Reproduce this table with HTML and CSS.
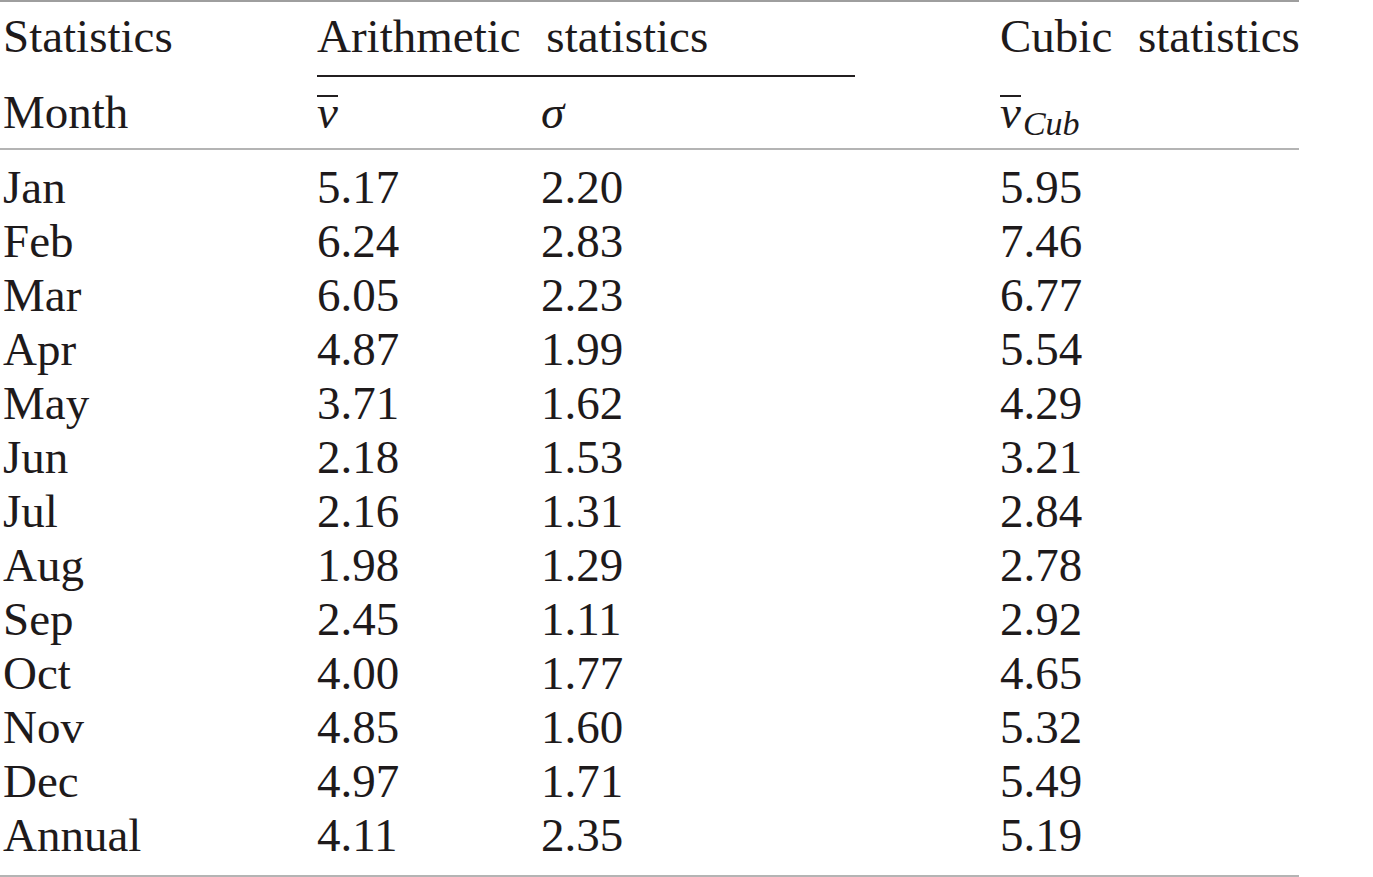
FILE: index.html
```html
<!DOCTYPE html>
<html>
<head>
<meta charset="utf-8">
<link rel="stylesheet" href="styles.css">
</head>
<body>
<table class="stats">
  <colgroup>
    <col class="c-month">
    <col class="c-mean">
    <col class="c-sigma">
    <col class="c-gap">
    <col class="c-cub">
  </colgroup>
  <thead>
    <tr class="h1">
      <th>Statistics</th>
      <th colspan="2" class="group"><span class="group-label">Arithmetic statistics</span></th>
      <th></th>
      <th class="wide">Cubic statistics</th>
    </tr>
    <tr class="h2">
      <th>Month</th>
      <th><span class="bar"><i>v</i></span></th>
      <th><i>σ</i></th>
      <th></th>
      <th><span class="bar"><i>v</i></span><sub><i>Cub</i></sub></th>
    </tr>
  </thead>
  <tbody>
    <tr class="first"><td>Jan</td><td>5.17</td><td>2.20</td><td></td><td>5.95</td></tr>
    <tr><td>Feb</td><td>6.24</td><td>2.83</td><td></td><td>7.46</td></tr>
    <tr><td>Mar</td><td>6.05</td><td>2.23</td><td></td><td>6.77</td></tr>
    <tr><td>Apr</td><td>4.87</td><td>1.99</td><td></td><td>5.54</td></tr>
    <tr><td>May</td><td>3.71</td><td>1.62</td><td></td><td>4.29</td></tr>
    <tr><td>Jun</td><td>2.18</td><td>1.53</td><td></td><td>3.21</td></tr>
    <tr><td>Jul</td><td>2.16</td><td>1.31</td><td></td><td>2.84</td></tr>
    <tr><td>Aug</td><td>1.98</td><td>1.29</td><td></td><td>2.78</td></tr>
    <tr><td>Sep</td><td>2.45</td><td>1.11</td><td></td><td>2.92</td></tr>
    <tr><td>Oct</td><td>4.00</td><td>1.77</td><td></td><td>4.65</td></tr>
    <tr><td>Nov</td><td>4.85</td><td>1.60</td><td></td><td>5.32</td></tr>
    <tr><td>Dec</td><td>4.97</td><td>1.71</td><td></td><td>5.49</td></tr>
    <tr class="last"><td>Annual</td><td>4.11</td><td>2.35</td><td></td><td>5.19</td></tr>
  </tbody>
</table>
</body>
</html>
```
FILE: styles.css
```css
html, body {
  margin: 0;
  padding: 0;
  background: #ffffff;
}

.stats {
  border-collapse: collapse;
  width: 1299px;
  table-layout: fixed;
  font-family: "Liberation Serif", "Times New Roman", serif;
  font-size: 47px;
  color: #1e1a1b;
  border-top: 2px solid #9e9e9e;
  border-bottom: 2px solid #b4b4b4;
}

.c-month { width: 317px; }
.c-mean { width: 224px; }
.c-sigma { width: 314px; }
.c-gap { width: 145px; }
.c-cub { width: 299px; }

.stats th,
.stats td {
  padding: 0;
  text-align: left;
  font-weight: normal;
  line-height: 54px;
  vertical-align: baseline;
  white-space: nowrap;
}

.stats th:first-child,
.stats td:first-child {
  padding-left: 3px;
}

.h1 th {
  padding-top: 7px;
  padding-bottom: 12px;
}

.group {
  border-bottom: 2px solid #231f20;
}

.group-label,
.wide {
  word-spacing: 14px;
}

.h2 th {
  padding-top: 8px;
  padding-bottom: 9px;
  border-bottom: 2px solid #b4b4b4;
}

.bar {
  display: inline-block;
  border-top: 2px solid #231f20;
  line-height: 0.64em;
}

.stats sub {
  font-size: 34px;
  line-height: 0;
  vertical-align: -7px;
  margin-left: 2px;
}

.first td {
  padding-top: 10px;
}

.last td {
  padding-bottom: 13px;
}
```
